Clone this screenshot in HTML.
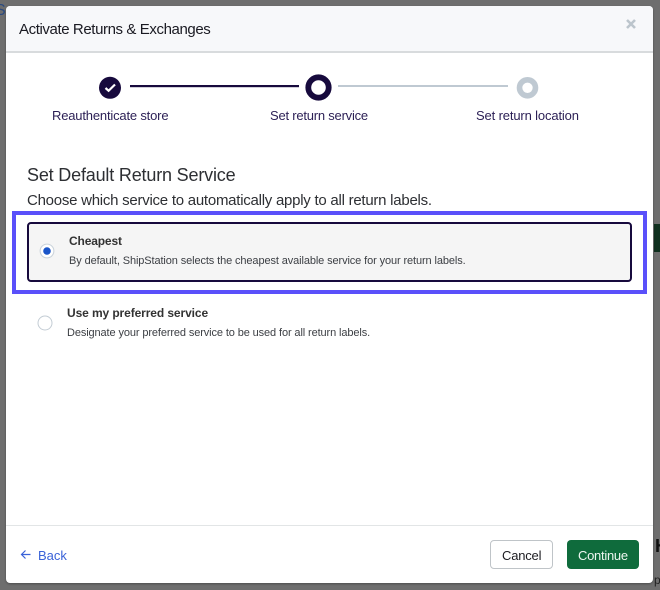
<!DOCTYPE html>
<html>
<head>
<meta charset="utf-8">
<style>
html,body{margin:0;padding:0;width:660px;height:590px;overflow:hidden;background:#6e6e6e;font-family:"Liberation Sans",sans-serif;}
.a{position:absolute;}
.t{position:absolute;white-space:nowrap;line-height:1;}
</style>
</head>
<body>
<div class="a" style="left:654px;top:224px;width:6px;height:28px;background:#10301f"></div>
<div class="t" style="left:-5px;top:3px;font-size:16px;color:#2a4a80">S</div>
<div class="t" style="left:655px;top:537px;font-size:18px;font-weight:bold;color:#111">H</div>
<div class="t" style="left:654px;top:574px;font-size:12px;color:#222">p</div>

<div class="a" style="left:6px;top:6px;width:647px;height:577px;background:#fff;border-radius:4px;overflow:hidden;box-shadow:0 1px 2px rgba(0,0,0,.3)">
  <div class="a" style="left:0;top:0;width:647px;height:45px;background:#f7f8fa;border-bottom:2px solid #d8dbdd"></div>
</div>

<div class="t" style="left:19px;top:22px;font-size:15px;color:#1a1a22;letter-spacing:-.4px">Activate Returns &amp; Exchanges</div>
<svg class="a" style="left:625px;top:18px" width="12" height="12" viewBox="0 0 12 12"><path d="M2 2L10 10M10 2L2 10" stroke="#bcc5cc" stroke-width="2.6" fill="none"/></svg>

<svg class="a" style="left:0;top:70px" width="660" height="34" viewBox="0 0 660 34">
  <circle cx="110" cy="17.800" r="11" fill="#170a3d"/>
  <path d="M105.500 18L108.600 20.800L115 14.500" stroke="#fff" stroke-width="2.200" fill="none"/>
  <rect x="130" y="15" width="169" height="2.200" fill="#170a3d"/>
  <circle cx="318.500" cy="17.500" r="10.200" fill="#fff" stroke="#170a3d" stroke-width="5.800"/>
  <rect x="338" y="15" width="170" height="2" fill="#bfc9d2"/>
  <circle cx="527.500" cy="17.800" r="8" fill="#fff" stroke="#bfc9d2" stroke-width="5.600"/>
</svg>
<div class="t" style="left:52px;top:109px;font-size:13px;color:#2b1f55;letter-spacing:-.18px">Reauthenticate store</div>
<div class="t" style="left:270px;top:109px;font-size:13px;color:#2b1f55;letter-spacing:-.22px">Set return service</div>
<div class="t" style="left:476px;top:109px;font-size:13px;color:#2b1f55;letter-spacing:-.14px">Set return location</div>

<div class="t" style="left:27px;top:166px;font-size:18px;color:#2d2f33;letter-spacing:-.18px">Set Default Return Service</div>
<div class="t" style="left:27px;top:193px;font-size:15px;color:#2d2f33;letter-spacing:-.25px">Choose which service to automatically apply to all return labels.</div>

<div class="a" style="left:12px;top:211px;width:627px;height:75px;border:4px solid #5a50fa"></div>
<div class="a" style="left:27px;top:222px;width:601px;height:56px;border:2px solid #170a3d;border-radius:4px;background:#f5f5f5"></div>

<svg class="a" style="left:38px;top:243px" width="18" height="16" viewBox="0 0 18 16"><circle cx="9" cy="8" r="6.900" fill="#fff" stroke="#c9d2da" stroke-width="1"/><circle cx="9" cy="8" r="3.800" fill="#1a55c9"/></svg>
<div class="t" style="left:69px;top:235px;font-size:12px;font-weight:bold;color:#333;letter-spacing:-.15px">Cheapest</div>
<div class="t" style="left:69px;top:256px;font-size:11px;color:#3c3f44;letter-spacing:-.11px">By default, ShipStation selects the cheapest available service for your return labels.</div>

<svg class="a" style="left:37px;top:315px" width="16" height="16" viewBox="0 0 16 16"><circle cx="8" cy="8" r="7" fill="#fff" stroke="#c3ccd4" stroke-width="1"/></svg>
<div class="t" style="left:67px;top:307px;font-size:12px;font-weight:bold;color:#333;letter-spacing:-.1px">Use my preferred service</div>
<div class="t" style="left:67px;top:328px;font-size:11px;color:#3c3f44;letter-spacing:-.115px">Designate your preferred service to be used for all return labels.</div>

<div class="a" style="left:6px;top:525px;width:647px;height:1px;background:#e2e5e6"></div>

<svg class="a" style="left:20px;top:549px" width="12" height="12" viewBox="0 0 12 12"><path d="M10.500 5.500H1.500M5.500 1.500L1.500 5.500L5.500 9.500" stroke="#3a62d8" stroke-width="1.200" fill="none"/></svg>
<div class="t" style="left:38px;top:549px;font-size:13px;color:#3a62d8">Back</div>

<div class="a" style="left:490px;top:540px;width:61px;height:27px;border:1px solid #bfc4c8;border-radius:4px;background:#fff"></div>
<div class="t" style="left:502px;top:549px;font-size:13px;color:#1d1d22;letter-spacing:-.2px">Cancel</div>
<div class="a" style="left:567px;top:540px;width:72px;height:29px;border-radius:4px;background:#0f6b3c"></div>
<div class="t" style="left:578px;top:549px;font-size:13px;color:#eef6f0;letter-spacing:-.28px">Continue</div>
</body>
</html>
